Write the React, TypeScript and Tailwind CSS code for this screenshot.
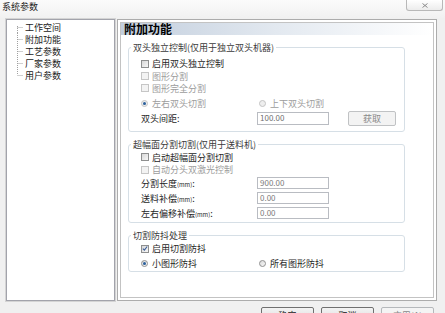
import React from "react";

const FONT = "font-['Noto_Sans_CJK_SC','Noto_Sans_CJK_JP',sans-serif]";

function CheckBox({ checked = false, disabled = false }: { checked?: boolean; disabled?: boolean }) {
  return (
    <span
      className={`w-[8px] h-[8px] shrink-0 border flex items-center justify-center ${
        disabled
          ? "border-[#c6c6c6] bg-[#f3f3f3]"
          : "border-[#8e8f8f] bg-linear-to-br from-[#d8d8d8] to-[#f7f7f7]"
      }`}
    >
      {checked && (
        <svg width="7" height="7" viewBox="0 0 7 7">
          <polyline points="1,3.6 2.8,5.4 6,1.2" fill="none" stroke="#3d5f99" strokeWidth="1.3" />
        </svg>
      )}
    </span>
  );
}

function Radio({ checked = false, disabled = false }: { checked?: boolean; disabled?: boolean }) {
  return (
    <span
      className={`w-[7px] h-[7px] shrink-0 rounded-full border flex items-center justify-center ${
        disabled ? "border-[#c4c4c4] bg-[#eeeeee]" : "border-[#8f8f8f] bg-linear-to-br from-[#dadada] to-[#f8f8f8]"
      }`}
    >
      {checked && <span className="w-[3px] h-[3px] rounded-full bg-[#2a5f9c]" />}
    </span>
  );
}

function Group({ title, className, children }: { title: string; className: string; children: React.ReactNode }) {
  return (
    <div className={`relative ml-[7px] w-[277px] border border-[#d6dfe6] rounded-[3px] ${className}`}>
      <span className="absolute left-[2px] top-[-7px] px-[2px] bg-white leading-[13px] text-[9px] text-[#3a3a3a] whitespace-nowrap">
        {title}
      </span>
      {children}
    </div>
  );
}

function Input({ value }: { value: string }) {
  return (
    <div className="ml-auto mr-[75px] w-[72px] h-[12px] border border-[#b9bcc2] bg-white flex items-center pl-[2px] text-[8px] leading-none text-[#7a7a7a]">
      {value}
    </div>
  );
}

function Mm() {
  return <span className="text-[6px] align-middle">(mm)</span>;
}

function TreeRow({ label, pos }: { label: string; pos: "first" | "mid" | "last" }) {
  return (
    <div className="h-[12px] flex items-center">
      <svg width="18" height="12" viewBox="0 0 18 12" className="shrink-0">
        <line
          x1="10.5"
          x2="10.5"
          y1={pos === "first" ? 5 : 0}
          y2={pos === "last" ? 6 : 12}
          stroke="#a0a0a0"
          strokeDasharray="1 1"
        />
        <line x1="10.5" x2="16" y1="6.5" y2="6.5" stroke="#a0a0a0" strokeDasharray="1 1" />
      </svg>
      <span className="text-[9px] leading-none text-[#222] whitespace-nowrap">{label}</span>
    </div>
  );
}

function Btn({ label, disabled = false }: { label: string; disabled?: boolean }) {
  return (
    <div
      className={`w-[53px] h-[16px] rounded-[2px] border flex items-center justify-center text-[9px] leading-none ${
        disabled
          ? "border-[#b5b8bb] bg-[#f4f4f4] text-[#8a8a8a]"
          : "border-[#707070] bg-linear-to-b from-[#f3f3f3] to-[#dcdcdc] text-[#222]"
      }`}
    >
      {label}
    </div>
  );
}

export default function App() {
  return (
    <div className={`w-[445px] h-[313px] overflow-hidden bg-[#f0f0f0] flex flex-col ${FONT}`}>
      {/* title bar */}
      <div className="h-[18px] shrink-0 flex items-start bg-linear-to-b from-[#fbfbfb] to-[#f1f1f1]">
        <span className="ml-[2px] mt-[2px] text-[9px] leading-[10px] text-[#222]">系统参数</span>
        <div className="ml-auto mr-[2px] w-[37px] h-[11px] rounded-b-[3px] border border-t-0 border-[#b8b8b8] bg-linear-to-b from-[#ffffff] to-[#ececec] flex items-center justify-center">
          <svg width="6" height="5" viewBox="0 0 6 5">
            <line x1="0.5" y1="0.5" x2="5.5" y2="4.5" stroke="#8a8a8a" strokeWidth="1" />
            <line x1="5.5" y1="0.5" x2="0.5" y2="4.5" stroke="#8a8a8a" strokeWidth="1" />
          </svg>
        </div>
      </div>

      {/* panels */}
      <div className="h-[284px] shrink-0 flex pl-[5px]">
        {/* tree */}
        <div className="w-[111px] h-full border border-[#d4d4d4]">
          <div className="h-full border border-[#a2a3ab] bg-white pt-[1px]">
            <TreeRow label="工作空间" pos="first" />
            <TreeRow label="附加功能" pos="mid" />
            <TreeRow label="工艺参数" pos="mid" />
            <TreeRow label="厂家参数" pos="mid" />
            <TreeRow label="用户参数" pos="last" />
          </div>
        </div>

        {/* right panel */}
        <div className="ml-[1px] mt-[1px] w-[320px] h-[282px] border border-[#acacac] bg-white p-[2px]">
          <div className="h-full border border-[#c3c3c3] bg-white">
            <div className="h-[12px] bg-linear-to-r from-[#c2cedd] via-[#e3e9f0] to-[#ffffff] pl-[3px] flex items-center">
              <span className="text-[12px] leading-none font-bold text-black">附加功能</span>
            </div>

            {/* group 1 */}
            <Group title="双头独立控制(仅用于独立双头机器)" className="mt-[12px] h-[85px] pt-[9px] pl-[12px]">
              <div className="h-[13px] flex items-center gap-[3px]">
                <CheckBox />
                <span className="text-[9px] leading-none text-[#1e1e1e]">启用双头独立控制</span>
              </div>
              <div className="h-[12px] flex items-center gap-[3px]">
                <CheckBox disabled />
                <span className="text-[9px] leading-none text-[#9c9c9c]">图形分割</span>
              </div>
              <div className="h-[12px] flex items-center gap-[3px]">
                <CheckBox disabled />
                <span className="text-[9px] leading-none text-[#9c9c9c]">图形完全分割</span>
              </div>
              <div className="mt-[3px] h-[13px] flex items-center">
                <div className="w-[118px] flex items-center gap-[4px]">
                  <Radio checked disabled />
                  <span className="text-[9px] leading-none text-[#9c9c9c]">左右双头切割</span>
                </div>
                <div className="flex items-center gap-[4px]">
                  <Radio disabled />
                  <span className="text-[9px] leading-none text-[#9c9c9c]">上下双头切割</span>
                </div>
              </div>
              <div className="h-[16px] flex items-center">
                <span className="text-[9px] leading-none text-[#1e1e1e]">双头间距:</span>
                <div className="ml-auto mr-[8px] flex items-center gap-[19px]">
                  <div className="w-[72px] h-[13px] border border-[#b9bcc2] bg-white flex items-center pl-[2px] text-[8px] leading-none text-[#6f6f6f]">
                    100.00
                  </div>
                  <div className="w-[48px] h-[15px] rounded-[2px] border border-[#c0c2c4] bg-[#f3f3f3] flex items-center justify-center text-[9px] leading-none text-[#8a8a8a]">
                    获取
                  </div>
                </div>
              </div>
            </Group>

            {/* group 2 */}
            <Group title="超幅面分割切割(仅用于送料机)" className="mt-[12px] h-[79px] pt-[6px] pl-[12px]">
              <div className="h-[12px] flex items-center gap-[3px]">
                <CheckBox />
                <span className="text-[9px] leading-none text-[#1e1e1e]">启动超幅面分割切割</span>
              </div>
              <div className="h-[13px] flex items-center gap-[3px]">
                <CheckBox disabled />
                <span className="text-[9px] leading-none text-[#9c9c9c]">自动分头双激光控制</span>
              </div>
              <div className="h-[14px] flex items-center">
                <span className="text-[9px] leading-none text-[#1e1e1e]">
                  分割长度<Mm />:
                </span>
                <Input value="900.00" />
              </div>
              <div className="mt-[1px] h-[14px] flex items-center">
                <span className="text-[9px] leading-none text-[#1e1e1e]">
                  送料补偿<Mm />:
                </span>
                <Input value="0.00" />
              </div>
              <div className="mt-[1px] h-[14px] flex items-center">
                <span className="text-[9px] leading-none text-[#1e1e1e]">
                  左右偏移补偿<Mm />:
                </span>
                <Input value="0.00" />
              </div>
            </Group>

            {/* group 3 */}
            <Group title="切割防抖处理" className="mt-[12px] h-[37px] pt-[6px] pl-[12px]">
              <div className="h-[13px] flex items-center gap-[3px]">
                <CheckBox checked />
                <span className="text-[9px] leading-none text-[#1e1e1e]">启用切割防抖</span>
              </div>
              <div className="mt-[2px] h-[12px] flex items-center">
                <div className="w-[118px] flex items-center gap-[4px]">
                  <Radio checked />
                  <span className="text-[9px] leading-none text-[#1e1e1e]">小图形防抖</span>
                </div>
                <div className="flex items-center gap-[4px]">
                  <Radio />
                  <span className="text-[9px] leading-none text-[#1e1e1e]">所有图形防抖</span>
                </div>
              </div>
            </Group>
          </div>
        </div>
      </div>

      {/* buttons */}
      <div className="mt-[5px] shrink-0 flex pl-[261px] gap-[7px]">
        <Btn label="确定" />
        <Btn label="取消" />
        <Btn label="应用(A)" disabled />
      </div>
    </div>
  );
}
